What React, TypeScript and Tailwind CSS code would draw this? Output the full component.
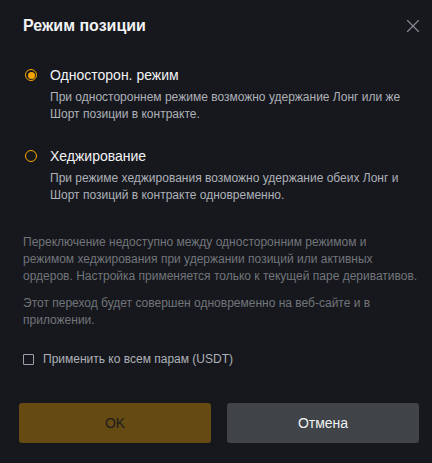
import { X } from "lucide-react";

const FONT = { fontFamily: '"Liberation Sans", Arial, sans-serif' };

function Radio({ checked }: { checked: boolean }) {
  return (
    <span className="mt-[4px] flex h-[12px] w-[12px] shrink-0 items-center justify-center rounded-full border-[1.5px] border-[#f7a600]">
      {checked && <span className="h-[7px] w-[7px] rounded-full bg-[#f7a600]" />}
    </span>
  );
}

function Option({ checked, title, text }: { checked: boolean; title: string; text: string }) {
  return (
    <div className="flex gap-[13px] pl-[25px] pr-[18px]">
      <Radio checked={checked} />
      <div className="flex-1">
        <div className="text-[14px] leading-[20px] text-[#f2f3f5]">{title}</div>
        <p className="mt-[4px] text-[12px] leading-[17px] text-[#adb1b8]">{text}</p>
      </div>
    </div>
  );
}

export default function App() {
  return (
    <div className="h-[463px] w-[432px] overflow-hidden bg-[#17181d]" style={FONT}>
      <div className="flex items-center justify-between pl-[23px] pr-[8px] pt-[15px]">
        <h2 className="text-[16px] font-bold leading-[22px] text-[#f2f3f5]">Режим позиции</h2>
        <X className="h-[22px] w-[22px] text-[#8a8d94]" strokeWidth={1.2} />
      </div>

      <div className="mt-[28px] flex flex-col gap-[23px]">
        <Option
          checked
          title="Односторон. режим"
          text="При одностороннем режиме возможно удержание Лонг или же Шорт позиции в контракте."
        />
        <Option
          checked={false}
          title="Хеджирование"
          text="При режиме хеджирования возможно удержание обеих Лонг и Шорт позиций в контракте одновременно."
        />
      </div>

      <div className="mt-[30px] pl-[23px] pr-[12px] text-[12px] leading-[17px] text-[#71757a]">
        <p>
          Переключение недоступно между односторонним режимом и
          <br />
          режимом хеджирования при удержании позиций или активных ордеров. Настройка применяется только к текущей паре
          деривативов.
        </p>
        <p className="mt-[10px]">Этот переход будет совершен одновременно на веб-сайте и в приложении.</p>
      </div>

      <label className="mt-[22px] flex items-center gap-[9px] px-[23px]">
        <span className="h-[11px] w-[11px] rounded-[1px] border border-[#9da1a8]" />
        <span className="text-[12px] leading-[17px] text-[#adb1b8]">Применить ко всем парам (USDT)</span>
      </label>

      <div className="mt-[35px] flex gap-[16px] pl-[19px] pr-[13px]">
        <button className="h-[40px] flex-1 rounded-[3px] bg-[#654a12] text-[14px] text-[#1b1c1f]">OK</button>
        <button className="h-[40px] flex-1 rounded-[3px] bg-[#404347] text-[14px] text-[#f2f3f5]">Отмена</button>
      </div>
    </div>
  );
}
